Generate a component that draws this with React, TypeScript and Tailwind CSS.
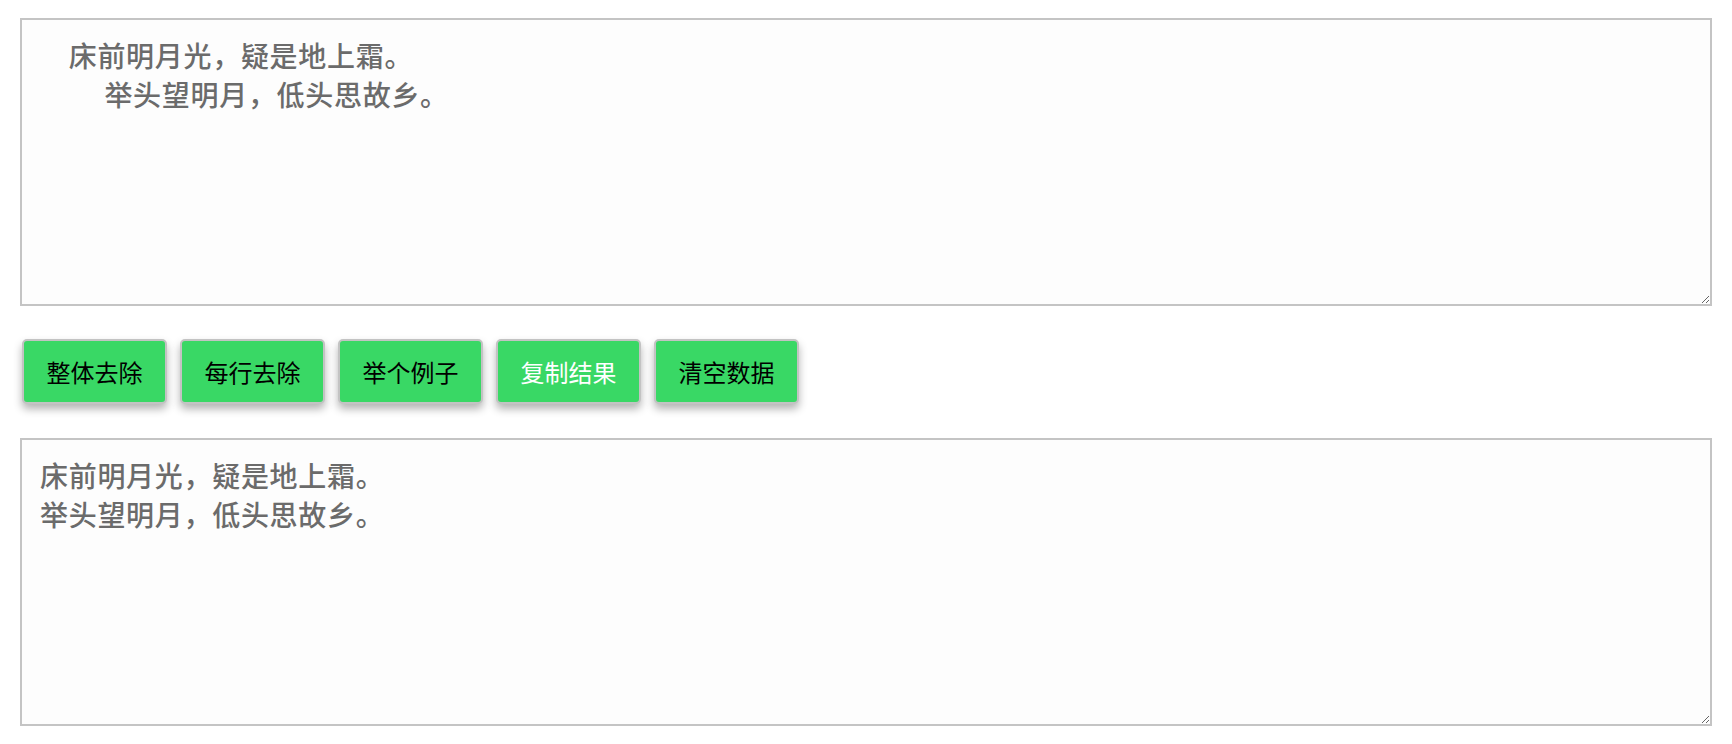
const SRC_TEXT = '\u3000床前明月光，疑是地上霜。\n\u3000\u3000 举头望明月，低头思故乡。';
const OUT_TEXT = '床前明月光，疑是地上霜。\n举头望明月，低头思故乡。';

const buttons = [
  { label: '整体去除', light: false },
  { label: '每行去除', light: false },
  { label: '举个例子', light: false },
  { label: '复制结果', light: true },
  { label: '清空数据', light: false },
];

const boxClass =
  'block w-full h-[288px] bg-[#fdfdfd] border-2 border-[#c4c4c4] pt-[16px] px-[18px] text-[28px] leading-[39px] tracking-[0.7px] font-medium text-[#6b6b6b] outline-none';

function App() {
  return (
    <div
      className="min-h-screen bg-white px-[20px] pt-[18px] pb-[18px]"
      style={{ fontFamily: '"Noto Sans CJK SC", "Noto Sans", sans-serif' }}
    >
      <textarea className={boxClass} defaultValue={SRC_TEXT} />

      <div className="flex gap-[13px] mt-[33px] mb-[34px] pl-[2px]">
        {buttons.map(b => (
          <button
            key={b.label}
            className={
              'w-[145px] h-[65px] rounded-[5px] bg-[#39d865] border-2 border-[#c3c3c3] shadow-[0_5px_9px_rgba(0,0,0,0.3)] text-[24px] ' +
              (b.light ? 'text-white' : 'text-black')
            }
          >
            {b.label}
          </button>
        ))}
      </div>

      <textarea className={boxClass} defaultValue={OUT_TEXT} />
    </div>
  );
}

export default App;
